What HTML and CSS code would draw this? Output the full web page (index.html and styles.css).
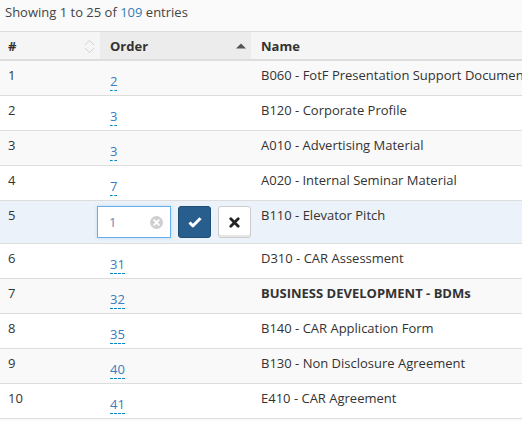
FILE: index.html
```html
<!DOCTYPE html>
<html>
<head>
<meta charset="utf-8">
<link rel="stylesheet" href="styles.css">
</head>
<body>
<div class="info">Showing 1 to 25 of <span class="hl">109</span> entries</div>
<table class="grid">
  <colgroup>
    <col class="c-num"><col class="c-order"><col class="c-name">
  </colgroup>
  <thead>
    <tr>
      <th class="th-num"><div class="th-in"><span>#</span>
        <svg class="sort-both" width="11" height="15" viewBox="0 0 11 15"><path d="M1 6 L5.5 1.5 L10 6" fill="none" stroke="#d2d2d2" stroke-width="1"/><path d="M1 9 L5.5 13.5 L10 9" fill="none" stroke="#d2d2d2" stroke-width="1"/></svg>
      </div></th>
      <th class="th-order sorted"><div class="th-in"><span>Order</span>
        <svg class="sort-asc" width="10" height="6" viewBox="0 0 10 6"><path d="M0 5.5 L5 0.5 L10 5.5 Z" fill="#555"/></svg>
      </div></th>
      <th class="th-name"><div class="th-in"><span>Name</span></div></th>
    </tr>
  </thead>
  <tbody>
    <tr class="odd"><td>1</td><td class="ord"><a class="ed">2</a></td><td>B060 - FotF Presentation Support Documents</td></tr>
    <tr class="even"><td>2</td><td class="ord"><a class="ed">3</a></td><td>B120 - Corporate Profile</td></tr>
    <tr class="odd"><td>3</td><td class="ord"><a class="ed">3</a></td><td>A010 - Advertising Material</td></tr>
    <tr class="even"><td>4</td><td class="ord"><a class="ed">7</a></td><td>A020 - Internal Seminar Material</td></tr>
    <tr class="editing"><td>5</td><td class="ord-edit">
      <div class="edit-form">
        <div class="inp"><span class="val">1</span>
          <svg class="clear" width="13" height="13" viewBox="0 0 13 13"><circle cx="6.5" cy="6.5" r="6.5" fill="#cfcfcf"/><path d="M4.2 4.2 L8.8 8.8 M8.8 4.2 L4.2 8.8" stroke="#fff" stroke-width="1.9" stroke-linecap="round"/></svg>
        </div>
        <button class="btn ok"><svg width="14" height="12" viewBox="0 0 14 12"><path d="M1.5 6.5 L5 9.8 L12.5 2.2" fill="none" stroke="#fff" stroke-width="3" stroke-linejoin="round"/></svg></button>
        <button class="btn cancel"><svg width="11" height="11" viewBox="0 0 11 11"><path d="M1.8 1.8 L9.2 9.2 M9.2 1.8 L1.8 9.2" stroke="#222" stroke-width="2.8" stroke-linecap="round"/></svg></button>
      </div>
    </td><td>B110 - Elevator Pitch</td></tr>
    <tr class="even"><td>6</td><td class="ord"><a class="ed">31</a></td><td>D310 - CAR Assessment</td></tr>
    <tr class="odd"><td>7</td><td class="ord"><a class="ed">32</a></td><td><b>BUSINESS DEVELOPMENT - BDMs</b></td></tr>
    <tr class="even"><td>8</td><td class="ord"><a class="ed">35</a></td><td>B140 - CAR Application Form</td></tr>
    <tr class="odd"><td>9</td><td class="ord"><a class="ed">40</a></td><td>B130 - Non Disclosure Agreement</td></tr>
    <tr class="even"><td>10</td><td class="ord"><a class="ed">41</a></td><td>E410 - CAR Agreement</td></tr>
  </tbody>
</table>
</body>
</html>
```
FILE: styles.css
```css
html, body {
  margin: 0;
  padding: 0;
  background: #fafafa;
  overflow: hidden;
}
body {
  font-family: "Open Sans", "Liberation Sans", sans-serif;
  font-size: 13px;
  color: #333;
  width: 522px;
  height: 421px;
}
.info {
  padding: 2px 5px 9px;
  line-height: 20px;
  color: #444;
}
.hl { color: #337ab7; }
.grid {
  border-collapse: collapse;
  table-layout: fixed;
  width: 640px;
}
.c-num { width: 100px; }
.c-order { width: 151px; }
.c-name { width: 389px; }
.grid thead th {
  border-top: 1px solid #dddddd;
  border-bottom: 2px solid #dddddd;
  background: #f5f5f5;
  padding: 5px 5px 4px 10px;
  line-height: 18px;
  text-align: left;
  font-weight: 700;
  color: #333;
}
.grid thead th.th-num { padding-left: 8px; }
.grid thead th.sorted { background: #ececec; }
.th-in {
  display: flex;
  align-items: center;
  justify-content: space-between;
}
.sort-both { display: block; }
.sort-asc { display: block; }
.grid tbody td {
  border-bottom: 1px solid #dddddd;
  padding: 5px 10px 4px;
  line-height: 18px;
  vertical-align: top;
  white-space: nowrap;
  overflow: hidden;
  color: #333;
}
.grid tbody td:first-child { padding-left: 8px; }
.grid tbody tr.odd td { background: #f9f9f9; }
.grid tbody tr.even td { background: #ffffff; }
.grid tbody tr.editing td { background: #ebf2f9; }
.ed {
  display: inline-block;
  margin-top: 6px;
  color: #3a7dc0;
  border-bottom: 1px dashed #0088cc;
  text-decoration: none;
  line-height: 18px;
}
.grid tbody td.ord-edit {
  padding: 5px 0 5px 0;
  overflow: visible;
}
.edit-form {
  display: flex;
  align-items: flex-start;
  gap: 7px;
  margin-left: -3px;
}
.inp {
  width: 76px;
  height: 32px;
  box-sizing: border-box;
  border: 1px solid #66afe9;
  background: #fff;
  box-shadow: 0 0 3px rgba(102, 175, 233, 0.35);
  display: flex;
  align-items: center;
  justify-content: space-between;
  padding: 0 7px 0 11px;
}
.val { color: #5b8cc0; line-height: 18px; }
.clear { display: block; }
.btn {
  box-sizing: border-box;
  height: 32px;
  border-radius: 3px;
  display: flex;
  align-items: center;
  justify-content: center;
  padding: 0;
  margin: 0;
  cursor: pointer;
}
.btn.ok {
  width: 35px;
  background: #285e8e;
  border: 1px solid #204d74;
}
.btn.cancel {
  width: 34px;
  background: #fff;
  border: 1px solid #cccccc;
  box-shadow: inset 0 -2px 0 #e6e6e6;
}
```
